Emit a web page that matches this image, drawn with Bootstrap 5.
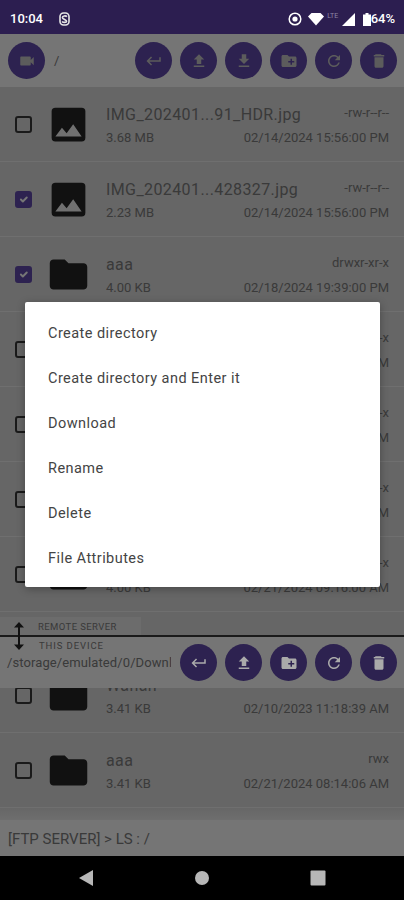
<!DOCTYPE html>
<html lang="en">
<head>
    <meta charset="UTF-8">
    <title>FTP Client</title>
    <link href="https://cdn.jsdelivr.net/npm/bootstrap@5.3.3/dist/css/bootstrap.min.css" rel="stylesheet">
    <script src="https://cdn.jsdelivr.net/npm/bootstrap@5.3.3/dist/js/bootstrap.bundle.min.js"></script>
    <style>
        body {
            font-family: Roboto, "Liberation Sans", sans-serif;
            background: #dedede;
            color: #7e7e7e;
        }
        .phone {
            width: 404px;
            height: 900px;
            overflow: hidden;
        }
        .status-bar {
            height: 34px;
            background: #2c1e50;
            color: #fff;
            padding: 4px 9px 0 10px;
            font-size: 13px;
            font-weight: 500;
        }
        .lte-mark {
            width: 18px;
            margin-top: -5px;
            font-size: 7px;
            font-weight: 400;
            text-align: center;
            color: #8d86a3;
        }
        .wifi-mark {
            margin-left: 6px;
        }
        .scrim {
            position: absolute;
            top: 34px;
            left: 0;
            right: 0;
            bottom: 44px;
            background: rgba(0, 0, 0, .54);
        }
        .tool-bar {
            height: 53px;
            background: #fff;
            padding: 0 7px 0 8px;
        }
        .tool-btn {
            width: 37px;
            height: 37px;
            padding: 0;
            border: 0;
            border-radius: 50%;
            background: #624aae;
            color: #c8c8c8;
            flex: none;
        }
        .tool-btn svg {
            width: 18px;
            height: 18px;
            fill: currentColor;
        }
        .tool-btn.is-lit svg {
            position: relative;
            z-index: 2;
            fill: #aaa;
        }
        .tool-group {
            gap: 8px;
        }
        .root-path {
            margin-left: 9px;
            font-size: 13px;
        }
        .remote-pane {
            height: 601px;
            position: relative;
            overflow: hidden;
        }
        .local-pane {
            height: 183px;
            overflow: hidden;
            position: relative;
        }
        .local-list {
            height: 132px;
            padding-bottom: 12px;
            background: linear-gradient(#dedede 119px, #f0f0f0);
            overflow: hidden;
        }
        .file-row {
            height: 75px;
            flex: none;
            border-bottom: 1px solid #f2f2f2;
            padding: 0 15px;
        }
        .file-row .form-check-input {
            width: 17px;
            height: 17px;
            margin: 0;
            flex: none;
            border: 2px solid #3a3a3a;
            border-radius: 3px;
            background-color: transparent;
        }
        .file-row .form-check-input:checked {
            background-color: #624aae;
            border-color: #624aae;
        }
        .file-icon {
            width: 45px;
            height: 45px;
            margin: 0 15px 0 14px;
            flex: none;
            fill: #262626;
        }
        .file-body {
            padding-top: 16px;
            align-self: flex-start;
        }
        .file-top {
            height: 23px;
            line-height: 24px;
        }
        .file-name {
            font-size: 16px;
            letter-spacing: .4px;
        }
        .file-perm {
            font-size: 13px;
            line-height: 20px;
        }
        .file-meta {
            font-size: 13px;
            line-height: 24px;
        }
        .remote-tab {
            position: absolute;
            left: 0;
            bottom: 0;
            width: 141px;
            height: 18px;
            padding-left: 38px;
            background: #ececec;
            font-size: 9.5px;
            line-height: 20px;
            letter-spacing: .4px;
        }
        .pane-line {
            height: 2px;
            background: #3a3a3a;
        }
        .local-bar {
            height: 51px;
            padding: 0 7px 0 0;
            background: #fff;
        }
        .local-info {
            align-self: flex-start;
        }
        .local-label {
            font-size: 9.5px;
            line-height: 12px;
            padding: 3px 0 0 39px;
            letter-spacing: .9px;
        }
        .local-path {
            font-size: 13px;
            letter-spacing: .1px;
            line-height: 22px;
            width: 171px;
            padding-left: 7px;
            white-space: nowrap;
            overflow: hidden;
        }
        .drag-handle {
            position: absolute;
            left: 13px;
            top: 622px;
            width: 12px;
            height: 28px;
        }
        .log-bar {
            height: 36px;
            background: #fff;
            padding-left: 8px;
            font-size: 15px;
            line-height: 38px;
        }
        .nav-bar {
            height: 44px;
            background: #000;
            padding: 0 77px;
        }
        .nav-bar svg {
            width: 18px;
            height: 18px;
            fill: #b7b7b7;
        }
        .menu-box {
            position: absolute;
            top: 302px;
            left: 25px;
            width: 355px;
            padding: 7px 0 8px;
            background: #fff;
            border-radius: 2px;
            box-shadow: 0 2px 8px rgba(0, 0, 0, .3);
        }
        .menu-item {
            display: block;
            height: 45px;
            padding-left: 23px;
            font-size: 14.5px;
            line-height: 49px;
            letter-spacing: .45px;
            color: #444;
        }
    </style>
</head>
<body>
<div class="phone position-relative d-flex flex-column">
    <div class="status-bar d-flex align-items-center justify-content-between">
        <div class="d-flex align-items-center gap-3">
            <span>10:04</span>
            <svg width="11" height="14" viewBox="0 0 11 14" fill="none" stroke="#e6e6e6" stroke-width="1.6"><rect x="1" y="1" width="9" height="12" rx="3.5"/><path d="M8 4.6C7 3.6 3.4 3.6 3.4 5.4S7.6 7.6 7.6 9.2 4 10.6 3 9.4"/></svg>
        </div>
        <div class="d-flex align-items-center">
            <svg width="14" height="14" viewBox="0 0 14 14"><circle cx="7" cy="7" r="5.8" fill="none" stroke="#fff" stroke-width="1.5"/><circle cx="7" cy="7" r="2.6" fill="#fff"/></svg>
            <svg class="wifi-mark" width="16" height="13" viewBox="0 0 16 13"><path d="M0 3.5 3.5 0h9L16 3.5 8 12.5z" fill="#fff"/></svg>
            <span class="lte-mark">LTE</span>
            <svg width="13" height="13" viewBox="0 0 13 13"><path d="M13 0v13H0z" fill="#fff"/></svg>
            <svg class="ms-2" width="8" height="13" viewBox="0 0 8 13"><path d="M2.5 0h3v1.5H8V13H0V1.5h2.5z" fill="#fff"/></svg>
            <span class="status-pct">64%</span>
        </div>
    </div>

    <div class="remote-pane">
        <div class="tool-bar d-flex align-items-center">
            <button class="tool-btn"><svg viewBox="0 0 24 24"><path d="M17 10.5V7c0-.55-.45-1-1-1H4c-.55 0-1 .45-1 1v10c0 .55.45 1 1 1h12c.55 0 1-.45 1-1v-3.5l4 4v-11l-4 4z"/></svg></button>
            <span class="root-path flex-grow-1">/</span>
            <div class="d-flex tool-group">
                <button class="tool-btn"><svg viewBox="0 0 24 24"><path d="M19 7v4H5.83l3.58-3.59L8 6l-6 6 6 6 1.41-1.41L5.83 13H21V7z"/></svg></button>
                <button class="tool-btn"><svg viewBox="0 0 24 24"><path d="M9 16h6v-6h4l-7-7-7 7h4zm-4 2h14v2H5z"/></svg></button>
                <button class="tool-btn"><svg viewBox="0 0 24 24"><path d="M19 9h-4V3H9v6H5l7 7 7-7zM5 18v2h14v-2H5z"/></svg></button>
                <button class="tool-btn"><svg viewBox="0 0 24 24"><path d="M20 6h-8l-2-2H4c-1.11 0-1.99.89-1.99 2L2 18c0 1.11.89 2 2 2h16c1.11 0 2-.89 2-2V8c0-1.11-.89-2-2-2zm-1 8h-3v3h-2v-3h-3v-2h3V9h2v3h3v2z"/></svg></button>
                <button class="tool-btn"><svg viewBox="0 0 24 24"><path d="M17.65 6.35C16.2 4.9 14.21 4 12 4c-4.42 0-7.99 3.58-7.99 8s3.57 8 7.99 8c3.73 0 6.84-2.55 7.73-6h-2.08c-.82 2.33-3.04 4-5.65 4-3.31 0-6-2.69-6-6s2.69-6 6-6c1.66 0 3.14.69 4.22 1.78L13 11h7V4l-2.35 2.35z"/></svg></button>
                <button class="tool-btn"><svg viewBox="0 0 24 24"><path d="M6 19c0 1.1.9 2 2 2h8c1.1 0 2-.9 2-2V7H6v12zM19 4h-3.5l-1-1h-7l-1 1H5v2h14V4z"/></svg></button>
            </div>
        </div>
        <div id="remote-list"></div>
        <div class="remote-tab">REMOTE SERVER</div>
    </div>
    <div class="pane-line"></div>

    <div class="local-pane">
        <div class="local-bar d-flex align-items-center justify-content-between">
            <div class="local-info">
                <div class="local-label">THIS DEVICE</div>
                <div class="local-path">/storage/emulated/0/Download</div>
            </div>
            <div class="d-flex tool-group">
                <button class="tool-btn is-lit"><svg viewBox="0 0 24 24"><path d="M19 7v4H5.83l3.58-3.59L8 6l-6 6 6 6 1.41-1.41L5.83 13H21V7z"/></svg></button>
                <button class="tool-btn is-lit"><svg viewBox="0 0 24 24"><path d="M9 16h6v-6h4l-7-7-7 7h4zm-4 2h14v2H5z"/></svg></button>
                <button class="tool-btn is-lit"><svg viewBox="0 0 24 24"><path d="M20 6h-8l-2-2H4c-1.11 0-1.99.89-1.99 2L2 18c0 1.11.89 2 2 2h16c1.11 0 2-.89 2-2V8c0-1.11-.89-2-2-2zm-1 8h-3v3h-2v-3h-3v-2h3V9h2v3h3v2z"/></svg></button>
                <button class="tool-btn is-lit"><svg viewBox="0 0 24 24"><path d="M17.65 6.35C16.2 4.9 14.21 4 12 4c-4.42 0-7.99 3.58-7.99 8s3.57 8 7.99 8c3.73 0 6.84-2.55 7.73-6h-2.08c-.82 2.33-3.04 4-5.65 4-3.31 0-6-2.69-6-6s2.69-6 6-6c1.66 0 3.14.69 4.22 1.78L13 11h7V4l-2.35 2.35z"/></svg></button>
                <button class="tool-btn is-lit"><svg viewBox="0 0 24 24"><path d="M6 19c0 1.1.9 2 2 2h8c1.1 0 2-.9 2-2V7H6v12zM19 4h-3.5l-1-1h-7l-1 1H5v2h14V4z"/></svg></button>
            </div>
        </div>
        <div id="local-list" class="local-list d-flex flex-column justify-content-end"></div>
    </div>

    <div class="log-bar">[FTP SERVER] &gt; LS : /</div>
    <div class="nav-bar d-flex align-items-center justify-content-between">
        <svg viewBox="0 0 18 18"><path d="M16 1v16L2 9z"/></svg>
        <svg viewBox="0 0 18 18"><circle cx="9" cy="9" r="7"/></svg>
        <svg viewBox="0 0 18 18"><rect x="1.5" y="1.5" width="15" height="15" rx="1"/></svg>
    </div>

    <div class="scrim"></div>
    <svg class="drag-handle" viewBox="0 0 12 28"><path d="M6 0l5 5.5H7v17h4L6 28l-5-5.5h4v-17H1z" fill="#111"/></svg>

    <div class="menu-box">
        <a class="menu-item text-decoration-none">Create directory</a>
        <a class="menu-item text-decoration-none">Create directory and Enter it</a>
        <a class="menu-item text-decoration-none">Download</a>
        <a class="menu-item text-decoration-none">Rename</a>
        <a class="menu-item text-decoration-none">Delete</a>
        <a class="menu-item text-decoration-none">File Attributes</a>
    </div>
</div>

<script>
    const imageIcon = '<svg class="file-icon" viewBox="0 0 24 24"><rect x="3" y="3" width="18" height="18" rx="2"/><path d="M5 18.4l3.5-4.7 2.5 3 3.5-4.9 4.5 6.6z" fill="#f4f4f4"/></svg>';
    const folderIcon = '<svg class="file-icon" viewBox="0 0 24 24"><path d="M10 4H4c-1.1 0-1.99.9-1.99 2L2 18c0 1.1.9 2 2 2h16c1.1 0 2-.9 2-2V8c0-1.1-.9-2-2-2h-8l-2-2z"/></svg>';

    const remoteFiles = [
        { name: 'IMG_202401...91_HDR.jpg', size: '3.68 MB', date: '02/14/2024 15:56:00 PM', perm: '-rw-r--r--', icon: imageIcon },
        { name: 'IMG_202401...428327.jpg', size: '2.23 MB', date: '02/14/2024 15:56:00 PM', perm: '-rw-r--r--', icon: imageIcon, checked: true },
        { name: 'aaa', size: '4.00 KB', date: '02/18/2024 19:39:00 PM', perm: 'drwxr-xr-x', icon: folderIcon, checked: true },
        { name: 'bbb', size: '4.00 KB', date: '02/19/2024 10:12:00 AM', perm: 'drwxr-xr-x', icon: folderIcon },
        { name: 'ccc', size: '4.00 KB', date: '02/20/2024 10:12:00 AM', perm: 'drwxr-xr-x', icon: folderIcon },
        { name: 'ddd', size: '4.00 KB', date: '02/20/2024 11:30:00 AM', perm: 'drwxr-xr-x', icon: folderIcon },
        { name: 'eee', size: '4.00 KB', date: '02/21/2024 09:16:00 AM', perm: 'drwxr-xr-x', icon: folderIcon }
    ];
    const localFiles = [
        { name: 'Wanan', size: '3.41 KB', date: '02/10/2023 11:18:39 AM', perm: 'rwx', icon: folderIcon },
        { name: 'aaa', size: '3.41 KB', date: '02/21/2024 08:14:06 AM', perm: 'rwx', icon: folderIcon }
    ];

    function fileRow(f) {
        return `<div class="file-row d-flex align-items-center">
            <input type="checkbox" class="form-check-input" ${f.checked ? 'checked' : ''}>
            ${f.icon}
            <div class="file-body flex-grow-1">
                <div class="d-flex justify-content-between file-top"><span class="file-name">${f.name}</span><span class="file-perm">${f.perm}</span></div>
                <div class="d-flex justify-content-between file-meta"><span>${f.size}</span><span>${f.date}</span></div>
            </div>
        </div>`;
    }

    document.getElementById('remote-list').innerHTML = remoteFiles.map(fileRow).join('');
    document.getElementById('local-list').innerHTML = localFiles.map(fileRow).join('');
</script>
</body>
</html>
